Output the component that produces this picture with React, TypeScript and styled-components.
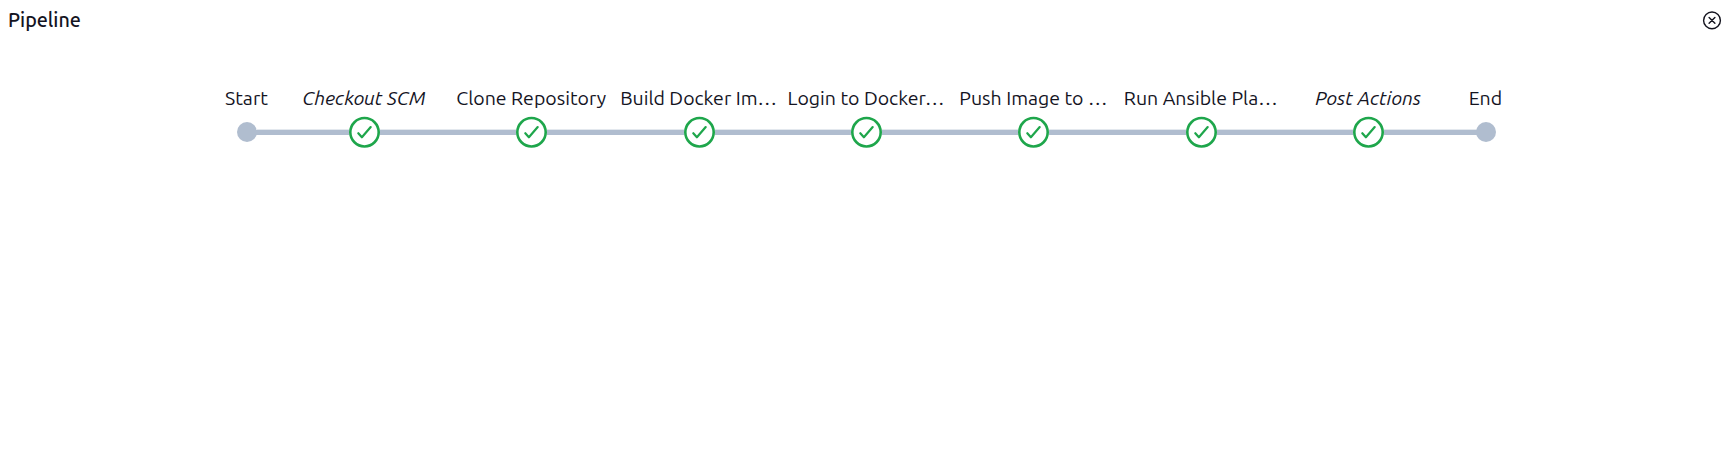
import React from "react";
import styled, { createGlobalStyle } from "styled-components";

const Global = createGlobalStyle`
  * { box-sizing: border-box; }
  body { margin: 0; background: #fff; color: #14141f; font-family: Ubuntu, "Noto Sans", sans-serif; }
`;

const Panel = styled.section`
  min-height: 457px;
`;

const Header = styled.header`
  display: flex;
  align-items: center;
  justify-content: space-between;
  height: 40px;
  padding: 0 14.5px 0 8px;
`;

const Title = styled.h2`
  margin: 0;
  font-size: 19.7px;
  font-weight: 500;
  line-height: 24px;
`;

const CloseButton = styled.button`
  display: flex;
  padding: 0;
  border: 0;
  background: none;
  color: #14141f;
`;

const Graph = styled.ol`
  display: flex;
  margin: 0;
  padding: 46px 0 0 213.4px;
  list-style: none;
`;

const Stage = styled.li<{ $terminal?: boolean }>`
  flex: 0 0 ${(p) => (p.$terminal ? "67.2px" : "167.4px")};
  display: flex;
  flex-direction: column;
`;

const Label = styled.span<{ $italic?: boolean }>`
  display: flex;
  justify-content: center;
  height: 30px;
  padding-right: 1px;
  font-size: 19.5px;
  font-weight: 400;
  line-height: 24px;
  white-space: pre;
  font-style: ${(p) => (p.$italic ? "italic" : "normal")};
`;

const Track = styled.div`
  display: flex;
  align-items: center;
  height: 32px;
`;

const Line = styled.i<{ $hidden?: boolean }>`
  flex: 1;
  height: 6px;
  border-top: 1px solid #e3e8ee;
  background: #b0bdcf;
  visibility: ${(p) => (p.$hidden ? "hidden" : "visible")};
`;

const Dot = styled.i`
  width: 20px;
  height: 20px;
  margin: 0 -1px;
  border-radius: 50%;
  background: #b0bdcf;
`;

const SuccessIcon = () => (
  <svg width="31" height="32" viewBox="-15.5 -16.25 31 32" fill="none" stroke="#1ea64b" strokeLinecap="round" strokeLinejoin="round">
    <circle r="14.2" strokeWidth="2.6" />
    <path d="M-6.2 1 L-2.6 5 L6.2 -5.2" strokeWidth="2.2" />
  </svg>
);

const CloseIcon = () => (
  <svg width="20" height="20" viewBox="-10 -10.4 20 20" fill="none" stroke="currentColor" strokeLinecap="round">
    <circle r="8.4" strokeWidth="1.4" />
    <path d="M-2.9 -2.9 L2.9 2.9 M2.9 -2.9 L-2.9 2.9" strokeWidth="1.4" />
  </svg>
);

type StageData = { label: string; italic?: boolean; terminal?: "start" | "end" };

const stages: StageData[] = [
  { label: "Start", terminal: "start" },
  { label: "Checkout SCM", italic: true },
  { label: "Clone Repository" },
  { label: "Build Docker Im…" },
  { label: "Login to Docker…" },
  { label: "Push Image to …" },
  { label: "Run Ansible Pla…" },
  { label: "Post Actions", italic: true },
  { label: "End", terminal: "end" },
];

export default function App() {
  return (
    <Panel>
      <Global />
      <Header>
        <Title>Pipeline</Title>
        <CloseButton aria-label="Close">
          <CloseIcon />
        </CloseButton>
      </Header>
      <Graph>
        {stages.map((s) => (
          <Stage key={s.label} $terminal={!!s.terminal}>
            <Label $italic={s.italic}>{s.label}</Label>
            <Track>
              <Line $hidden={s.terminal === "start"} />
              {s.terminal ? <Dot /> : <SuccessIcon />}
              <Line $hidden={s.terminal === "end"} />
            </Track>
          </Stage>
        ))}
      </Graph>
    </Panel>
  );
}
